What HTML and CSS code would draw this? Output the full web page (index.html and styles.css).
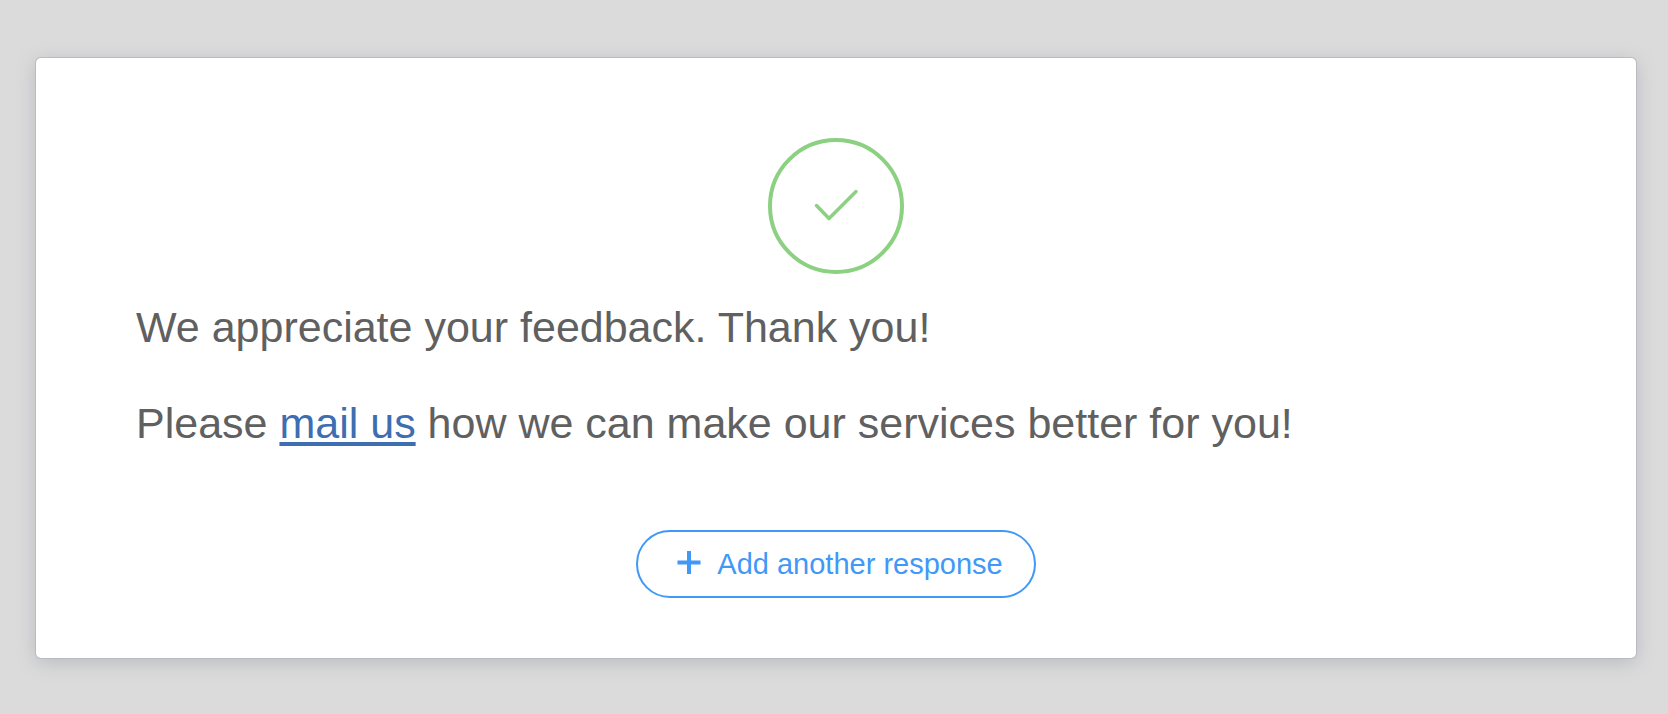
FILE: index.html
```html
<!DOCTYPE html>
<html lang="en">
<head>
<meta charset="utf-8">
<title>Thank you</title>
<link rel="stylesheet" href="styles.css">
</head>
<body>
<main class="card">
<svg class="success-icon" viewBox="0 0 136 136" fill="none" aria-hidden="true">
<circle cx="68" cy="68" r="66" stroke="#8bd181" stroke-width="4"/>
<path d="M48.500 67.500L61 80.500L88 53.500" stroke="#8bd181" stroke-width="3.500" stroke-linecap="round" stroke-linejoin="round"/>
</svg>
<div class="message">
<p>We appreciate your feedback. Thank you!</p>
<p>Please <a class="mail-link" href="mailto:feedback@example.com">mail us</a> how we can make our services better for you!</p>
</div>
<button class="add-button" type="button">
<svg class="plus-icon" viewBox="0 0 24 28" aria-hidden="true"><path d="M12 1V24M0.500 12.500H23.500" stroke="#4098f7" stroke-width="4"/></svg>
<span>Add another response</span>
</button>
</main>
</body>
</html>
```
FILE: styles.css
```css
* { box-sizing: border-box; }
body {
  margin: 0;
  padding: 58px 32px 56px 36px;
  background: #dbdbdb;
  font-family: "Liberation Sans", Arial, sans-serif;
}
.card {
  display: flex;
  flex-direction: column;
  align-items: center;
  padding: 80px 100px 60px;
  background: #fff;
  border-radius: 5px;
  box-shadow: 0 0 0 1px #b9bac2, 0 4px 20px #b8b9c0;
}
.success-icon { width: 136px; height: 136px; }
.message {
  width: 100%;
  margin-top: 27px;
  color: #606060;
  font-size: 43px;
  line-height: 52px;
}
.message p { margin: 0 0 44px; }
.mail-link {
  color: #3d6eb1;
  text-decoration-thickness: 4px;
  text-underline-offset: 4px;
}
.add-button {
  display: flex;
  align-items: center;
  gap: 16px;
  margin-top: 37px;
  height: 68px;
  padding: 0 31px 0 39px;
  border: 2px solid #4098f7;
  border-radius: 34px;
  background: #fff;
  color: #4098f7;
  font-family: inherit;
  font-size: 29px;
}
.plus-icon { width: 24px; height: 28px; }
```
